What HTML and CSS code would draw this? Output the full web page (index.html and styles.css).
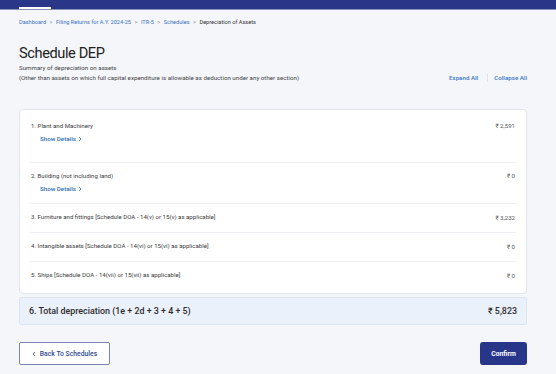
FILE: index.html
```html
<!DOCTYPE html>
<html lang="en">
<head>
<meta charset="utf-8">
<title>Schedule DEP</title>
<link rel="stylesheet" href="styles.css">
</head>
<body>
<div class="topbar"><span class="tab"></span></div>
<main class="page">
  <nav class="crumbs">
    <a>Dashboard</a><span class="sep">&gt;</span>
    <a>Filing Returns for A.Y. 2024-25</a><span class="sep">&gt;</span>
    <a>ITR-5</a><span class="sep">&gt;</span>
    <a>Schedules</a><span class="sep">&gt;</span>
    <span class="current">Depreciation of Assets</span>
  </nav>
  <h1 class="title">Schedule DEP</h1>
  <div class="subhead">
    <div class="desc">
      <div>Summary of depreciation on assets</div>
      <div>(Other than assets on which full capital expenditure is allowable as deduction under any other section)</div>
    </div>
    <div class="toggles">
      <a>Expand All</a><span class="vsep"></span><a>Collapse All</a>
    </div>
  </div>

  <section class="card">
    <div class="row row-first">
      <div class="row-main">
        <div class="label">1. Plant and Machinery</div>
        <a class="details">Show Details <svg class="chev" viewBox="0 0 6 8" width="4" height="6"><path d="M1.5 1 L4.5 4 L1.5 7" fill="none" stroke="currentColor" stroke-width="1.3"/></svg></a>
      </div>
      <div class="amount">₹ 2,591</div>
    </div>
    <div class="row">
      <div class="row-main">
        <div class="label">2. Building (not including land)</div>
        <a class="details">Show Details <svg class="chev" viewBox="0 0 6 8" width="4" height="6"><path d="M1.5 1 L4.5 4 L1.5 7" fill="none" stroke="currentColor" stroke-width="1.3"/></svg></a>
      </div>
      <div class="amount">₹ 0</div>
    </div>
    <div class="row">
      <div class="label">3. Furniture and fittings [Schedule DOA - 14(v) or 15(v) as applicable]</div>
      <div class="amount low">₹ 3,232</div>
    </div>
    <div class="row">
      <div class="label">4. Intangible assets [Schedule DOA - 14(vi) or 15(vi) as applicable]</div>
      <div class="amount low">₹ 0</div>
    </div>
    <div class="row last">
      <div class="label">5. Ships [Schedule DOA - 14(vii) or 15(vii) as applicable]</div>
      <div class="amount low">₹ 0</div>
    </div>
  </section>

  <section class="total">
    <div class="total-label">6. Total depreciation (1e + 2d + 3 + 4 + 5)</div>
    <div class="total-amount">₹ 5,823</div>
  </section>

  <div class="actions">
    <button class="btn-back"><svg class="chev-l" viewBox="0 0 6 8" width="4" height="6"><path d="M4.5 1 L1.5 4 L4.5 7" fill="none" stroke="currentColor" stroke-width="1.3"/></svg> Back To Schedules</button>
    <button class="btn-confirm">Confirm</button>
  </div>
</main>
</body>
</html>
```
FILE: styles.css
```css
* { box-sizing: border-box; }
html, body { margin: 0; padding: 0; }
body {
  background: #f5f6fa;
  font-family: Roboto, "Noto Sans", Arial, sans-serif;
  color: #333;
  overflow: hidden;
}
a { color: #2f6db5; cursor: pointer; }

.topbar {
  height: 10px;
  background: #2a3789;
  border-bottom: 1px solid #8c93b9;
  padding-left: 19px;
  display: flex;
  align-items: flex-end;
}
.topbar .tab {
  display: block;
  width: 32px;
  height: 2px;
  background: #ffffff;
}

.page {
  padding: 0 29px 0 19px;
}

.crumbs {
  margin-top: 7px;
  font-size: 5.6px;
  line-height: 10px;
  display: flex;
  align-items: center;
  white-space: nowrap;
}
.crumbs a { color: #3874bd; }
.crumbs .sep { color: #888; margin: 0 3.5px; }
.crumbs .current { color: #333; }

.title {
  margin: 17px 0 0;
  font-size: 14.6px;
  line-height: 18px;
  font-weight: 400;
  letter-spacing: -0.4px;
  color: #222;
}

.subhead {
  margin-top: 1px;
  display: flex;
  justify-content: space-between;
  align-items: flex-end;
}
.desc {
  font-size: 6.2px;
  line-height: 10px;
  color: #444;
}
.toggles {
  display: flex;
  align-items: center;
  font-size: 6.2px;
  line-height: 10px;
  font-weight: 500;
}
.toggles a { color: #3a77bf; }
.vsep {
  width: 1px;
  height: 8px;
  background: #dfe2ea;
  margin: 0 6px 0 9px;
}

.card {
  margin-top: 26px;
  background: #fff;
  border: 1px solid #e2e5ec;
  border-radius: 4px;
  padding: 3px 10px 3px;
}
.row {
  display: flex;
  justify-content: space-between;
  align-items: flex-start;
  padding: 8px 1px 9px;
  border-bottom: 1px solid #eef0f3;
}
.row.row-first { padding-bottom: 18px; }
.row.last { border-bottom: none; }
.row-main { display: flex; flex-direction: column; }
.label {
  font-size: 6.1px;
  line-height: 10px;
  color: #3a3a3a;
}
.details {
  margin: 3px 0 0 9px;
  font-size: 6.2px;
  line-height: 10px;
  font-weight: 500;
  color: #2f6db5;
  display: flex;
  align-items: center;
  gap: 2px;
}
.amount {
  font-size: 6.1px;
  line-height: 10px;
  color: #555;
}
.amount.low { margin-top: 1px; }

.total {
  margin-top: 3px;
  background: #ebf1fa;
  border: 1px solid #dde5f1;
  border-radius: 2px;
  padding: 7px 9px 7px 9px;
  display: flex;
  justify-content: space-between;
  align-items: center;
  line-height: 12px;
}
.total-label {
  font-size: 8.9px;
  font-weight: 500;
  color: #2b2b2b;
}
.total-amount {
  font-size: 8.9px;
  font-weight: 500;
  color: #2b2b2b;
}

.actions {
  margin-top: 17px;
  display: flex;
  justify-content: space-between;
  align-items: center;
}
.btn-back {
  width: 91px;
  height: 23px;
  background: #fff;
  border: 1px solid #7a84ad;
  border-radius: 2px;
  font-family: inherit;
  font-size: 6.8px;
  font-weight: 500;
  color: #2f4a8f;
  display: flex;
  align-items: center;
  justify-content: center;
  gap: 4px;
  padding: 0;
}
.btn-confirm {
  width: 47px;
  height: 23px;
  background: #28368a;
  border: none;
  border-radius: 3px;
  font-family: inherit;
  font-size: 6.8px;
  font-weight: 700;
  color: #fff;
  padding: 0;
}
```
